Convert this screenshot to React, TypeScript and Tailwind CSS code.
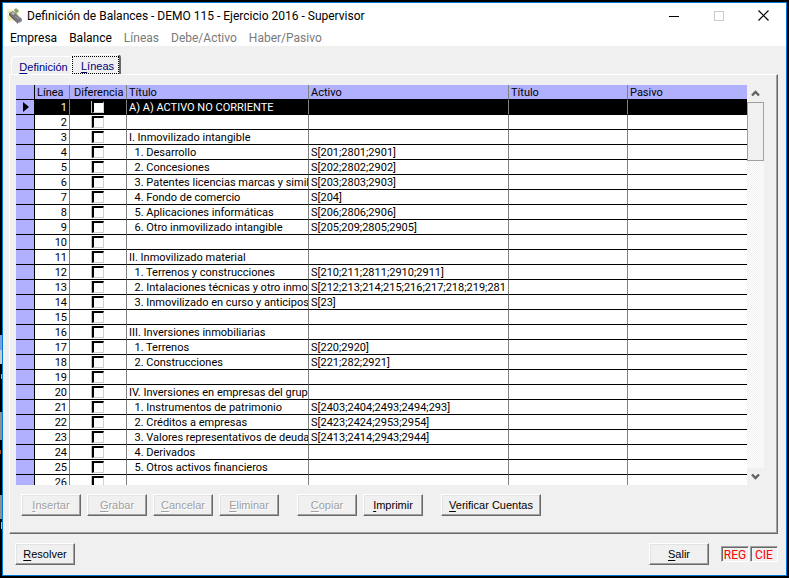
import React, { useState } from 'react';
import clsx from 'clsx';

interface BalanceLine {
  title: string;
  asset?: string;
}

interface ClassicButtonProps {
  label: string;
  disabled?: boolean;
  className?: string;
}

const lines: BalanceLine[] = [
  { title: 'A) A) ACTIVO NO CORRIENTE' },
  { title: '' },
  { title: 'I. Inmovilizado intangible' },
  { title: '  1. Desarrollo', asset: 'S[201;2801;2901]' },
  { title: '  2. Concesiones', asset: 'S[202;2802;2902]' },
  { title: '  3. Patentes licencias marcas y simila', asset: 'S[203;2803;2903]' },
  { title: '  4. Fondo de comercio', asset: 'S[204]' },
  { title: '  5. Aplicaciones informáticas', asset: 'S[206;2806;2906]' },
  { title: '  6. Otro inmovilizado intangible', asset: 'S[205;209;2805;2905]' },
  { title: '' },
  { title: 'II. Inmovilizado material' },
  { title: '  1. Terrenos y construcciones', asset: 'S[210;211;2811;2910;2911]' },
  { title: '  2. Intalaciones técnicas y otro inmov', asset: 'S[212;213;214;215;216;217;218;219;281' },
  { title: '  3. Inmovilizado en curso y anticipos', asset: 'S[23]' },
  { title: '' },
  { title: 'III. Inversiones inmobiliarias' },
  { title: '  1. Terrenos', asset: 'S[220;2920]' },
  { title: '  2. Construcciones', asset: 'S[221;282;2921]' },
  { title: '' },
  { title: 'IV. Inversiones en empresas del grupo' },
  { title: '  1. Instrumentos de patrimonio', asset: 'S[2403;2404;2493;2494;293]' },
  { title: '  2. Créditos a empresas', asset: 'S[2423;2424;2953;2954]' },
  { title: '  3. Valores representativos de deuda', asset: 'S[2413;2414;2943;2944]' },
  { title: '  4. Derivados' },
  { title: '  5. Otros activos financieros' },
  { title: '' },
];

const menus = [
  { label: 'Empresa', enabled: true },
  { label: 'Balance', enabled: true },
  { label: 'Líneas', enabled: false },
  { label: 'Debe/Activo', enabled: false },
  { label: 'Haber/Pasivo', enabled: false },
];

// First letter is the keyboard accelerator
const Accel: React.FC<{ label: string }> = ({ label }) => (
  <span>
    <span className="underline underline-offset-2">{label[0]}</span>
    {label.slice(1)}
  </span>
);

const ClassicButton: React.FC<ClassicButtonProps> = ({ label, disabled = false, className }) => (
  <button
    type="button"
    disabled={disabled}
    className={clsx(
      'h-[22px] border border-t-white border-r-[#696969] border-b-[#696969] border-l-white bg-[#f0f0f0] text-center leading-5 whitespace-nowrap shadow-[inset_-1px_-1px_0_#a0a0a0,inset_1px_1px_0_#e3e3e3]',
      disabled && 'text-[#a0a0a0] [text-shadow:1px_1px_0_#fff]',
      className
    )}
  >
    <Accel label={label} />
  </button>
);

const AppIcon = () => (
  <svg width="16" height="16" viewBox="0 0 16 16" aria-hidden="true">
    <path d="M0 1h12v12H0z" fill="#f8f4cc" />
    <path d="M1 4h3M1 9h4M1 11h6" stroke="#ddd59a" />
    <path d="M7 2l2-2 3 3-3 3z" fill="#8fa070" />
    <path d="M2 5l4-2 9 8-4 4z" fill="#77757c" />
    <path d="M2 5l9 10v1L2 7z" fill="#45434b" />
    <path d="M4 5l2-1 2 2-2 1z" fill="#b7c3ae" />
    <path d="M8 8l4 3M10 7l3 3" stroke="#a09ba6" />
    <path d="M11 14l4-3v2l-3 2z" fill="#8a7f96" />
  </svg>
);

// Desktop showing along the left edge of the window
const DesktopEdge = () => (
  <svg width="2" height="200" className="absolute top-[335px] left-0" shapeRendering="crispEdges" aria-hidden="true">
    <path d="M0 0h2v15H0z" fill="#7d9ee0" />
    <path d="M0 15h2v14H0z" fill="#c5ccd0" />
    <path d="M1 39h1v5H1z" fill="#e0b040" />
    <path d="M0 77h2v14H0zM0 91h2v14H0z" fill="#8c9296" />
    <path d="M0 115h1v4H0z" fill="#b04a20" />
    <path d="M0 160h2v24H0z" fill="#8c9296" />
    <path d="M1 187h1v7H1z" fill="#d8c050" />
  </svg>
);

const TitleBar = () => (
  <header className="flex h-[25px] items-center bg-white pl-1">
    <AppIcon />
    <h1 className="ml-1 flex-1 font-[Roboto,sans-serif] text-[12px] leading-4 whitespace-nowrap">
      Definición de Balances - DEMO 115 - Ejercicio 2016 - Supervisor
    </h1>
    <button type="button" aria-label="Minimizar" className="grid h-6 w-[45px] place-items-center">
      <svg width="10" height="10" shapeRendering="crispEdges">
        <path d="M0 5.5h10" stroke="#000" />
      </svg>
    </button>
    <button type="button" aria-label="Maximizar" disabled className="grid h-6 w-[45px] place-items-center">
      <svg width="10" height="10" shapeRendering="crispEdges">
        <path d="M.5.5h9v9h-9z" fill="none" stroke="#ccc" />
      </svg>
    </button>
    <button type="button" aria-label="Cerrar" className="grid h-6 w-[45px] place-items-center">
      <svg width="11" height="11">
        <path d="M.5.5l10 10M10.5.5l-10 10" stroke="#000" strokeWidth="1.2" />
      </svg>
    </button>
  </header>
);

const ScrollBar = () => (
  <div className="flex w-[17px] shrink-0 flex-col" role="presentation">
    <button type="button" aria-label="Subir" className="grid h-[17px] place-items-center">
      <svg width="9" height="7">
        <path d="M1 5.5L4.5 2 8 5.5" fill="none" stroke="#606060" strokeWidth="2.4" />
      </svg>
    </button>
    <div className="h-[59px] border border-[#a0a0a0] bg-[#f0f0f0]" />
    <div className="flex-1 bg-[repeating-conic-gradient(#fff_0_25%,#f0f0f0_0_50%)] bg-[length:2px_2px]" />
    <button type="button" aria-label="Bajar" className="grid h-[17px] place-items-center">
      <svg width="9" height="7">
        <path d="M1 1.5L4.5 5 8 1.5" fill="none" stroke="#606060" strokeWidth="2.4" />
      </svg>
    </button>
  </div>
);

const LinesTable = () => {
  const [current, setCurrent] = useState(0);
  const [checked, setChecked] = useState<Record<number, boolean>>({});

  const head = 'h-[15px] overflow-hidden border-r border-b border-r-[#808080] border-b-black px-0.5 pt-px text-left font-normal whitespace-nowrap';
  const cell = 'h-[15px] overflow-hidden border-r border-b border-r-[#808080] border-b-black pl-0.5 whitespace-pre';

  return (
    <div className="h-[400px] min-w-0 flex-1 overflow-hidden">
      <table className="w-full table-fixed border-separate border-spacing-0 font-[Roboto,sans-serif] leading-[13px]">
        <colgroup>
          <col className="w-[19px]" />
          <col className="w-[35px]" />
          <col className="w-[57px]" />
          <col className="w-[182px]" />
          <col className="w-[200px]" />
          <col className="w-[119px]" />
          <col />
        </colgroup>
        <thead className="bg-[#b0b0ff]">
          <tr>
            <th aria-label="Fila actual" className={clsx(head, 'border-r-black')} />
            <th className={head}>Línea</th>
            <th className={clsx(head, 'pl-1')}>Diferencia</th>
            <th className={head}>Título</th>
            <th className={head}>Activo</th>
            <th className={head}>Título</th>
            <th className={clsx(head, 'border-r-0')}>Pasivo</th>
          </tr>
        </thead>
        <tbody className="bg-white">
          {lines.map((line, i) => (
            <tr
              key={i}
              onClick={() => setCurrent(i)}
              className={clsx(i === current && 'bg-black text-white')}
            >
              <td className="h-[15px] border-r border-b border-black bg-[#b0b0ff] p-0">
                {i === current && (
                  <svg width="6" height="10" className="ml-[7px] block">
                    <path d="M0 0l6 5-6 5z" fill="#000" />
                  </svg>
                )}
              </td>
              <td className={clsx(cell, 'pt-px pr-0.5 text-right')}>{i + 1}</td>
              <td className={cell}>
                <input
                  type="checkbox"
                  aria-label={`Diferencia ${i + 1}`}
                  checked={!!checked[i]}
                  onChange={() => setChecked({ ...checked, [i]: !checked[i] })}
                  className="ml-5 block h-3 w-3 appearance-none border-t-2 border-r border-b border-l-2 border-t-black border-r-[#d0d0d0] border-b-[#d0d0d0] border-l-black bg-white shadow-[-1px_0_0_#c0c0c0] checked:bg-black"
                />
              </td>
              <td className={clsx(cell, 'pt-px')}>{line.title}</td>
              <td className={clsx(cell, 'pt-px')}>{line.asset}</td>
              <td className={cell} />
              <td className={clsx(cell, 'border-r-0')} />
            </tr>
          ))}
        </tbody>
      </table>
    </div>
  );
};

const StatusBox: React.FC<{ label: string }> = ({ label }) => (
  <span className="h-4 w-7 border border-t-[#a0a0a0] border-r-white border-b-white border-l-[#a0a0a0] text-center font-[Roboto,sans-serif] leading-4 text-[#ff0000] shadow-[inset_1px_1px_0_#696969]">
    {label}
  </span>
);

export default function App() {
  return (
    <div className="relative min-h-screen bg-black p-0.5 font-['Liberation_Sans',Arial,sans-serif] text-[11px] text-black">
      <DesktopEdge />
      <main className="border border-[#0078d7] bg-[#f0f0f0]">
        <TitleBar />
        <nav className="flex h-[18px] items-start gap-3 bg-white pl-[7px] font-[Roboto,sans-serif] text-[12px] leading-5">
          {menus.map((menu) => (
            <button
              key={menu.label}
              type="button"
              disabled={!menu.enabled}
              className="disabled:text-[#7a7a7a]"
            >
              {menu.label}
            </button>
          ))}
        </nav>

        <div className="pt-2 pr-2 pl-1.5">
          <div role="tablist" className="flex items-end pl-0.5 text-[#000080]">
            <button
              type="button"
              role="tab"
              aria-selected="false"
              className="h-[18px] w-[60px] rounded-tl-sm border-t border-l border-white pt-0.5 pl-1"
            >
              <Accel label="Definición" />
            </button>
            <button
              type="button"
              role="tab"
              aria-selected="true"
              className="h-5 w-[50px] rounded-t-sm border-t border-r-2 border-l border-t-white border-r-[#696969] border-l-white"
            >
              <span className="block h-[18px] border border-dotted border-black pl-1 leading-[18px]">
                <Accel label="Líneas" />
              </span>
            </button>
          </div>
          <section className="border border-t-white border-r-[#696969] border-b-[#696969] border-l-white pt-2.5 pr-[13px] pb-[17px] pl-1.5 shadow-[inset_-1px_-1px_0_#a0a0a0]">
            <div className="flex">
              <LinesTable />
              <ScrollBar />
            </div>
            <div className="mt-[9px] flex gap-1.5 pl-[5px]">
              <ClassicButton label="Insertar" disabled className="w-[60px]" />
              <ClassicButton label="Grabar" disabled className="w-[60px]" />
              <ClassicButton label="Cancelar" disabled className="w-[60px]" />
              <ClassicButton label="Eliminar" disabled className="w-[60px]" />
              <ClassicButton label="Copiar" disabled className="ml-3 w-[60px]" />
              <ClassicButton label="Imprimir" className="w-[60px]" />
              <ClassicButton label="Verificar Cuentas" className="ml-3 w-[100px]" />
            </div>
          </section>
        </div>

        <footer className="flex items-center pt-[9px] pr-2 pb-2.5 pl-3">
          <ClassicButton label="Resolver" className="w-[60px]" />
          <ClassicButton label="Salir" className="mr-3 ml-auto w-[60px]" />
          <div className="flex gap-px text-[12px]">
            <StatusBox label="REG" />
            <StatusBox label="CIE" />
          </div>
        </footer>
      </main>
    </div>
  );
}
